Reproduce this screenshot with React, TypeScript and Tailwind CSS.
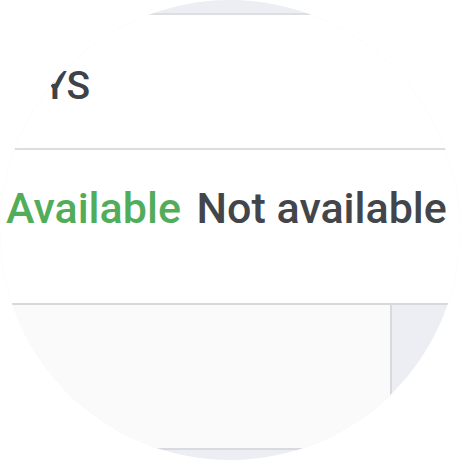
export default function App() {
  return (
    <div className="w-[460px] h-[460px] bg-white font-['Roboto',sans-serif]">
      <div className="w-[460px] h-[460px] rounded-full overflow-hidden bg-[#eceef3] flex flex-col">
        <div className="h-[13px] shrink-0" />

        {/* card */}
        <div className="h-[290px] shrink-0 bg-white border-t-2 border-[#dcdee2] flex flex-col">
          <div className="relative h-[133px] shrink-0 pl-[43px] pt-[52px]">
            <span className="block text-[39px] font-medium leading-none text-[#3f4347]">YS</span>
            <div className="absolute left-0 top-0 w-[70px] h-[90px] bg-white [clip-path:polygon(30px_46px,58px_46px,58px_62px,54px_69px,46px_69px,30px_76px)]" />
          </div>
          <div className="h-[2px] shrink-0 bg-[#dcdddf]" />
          <div className="pl-[6px] pt-[37px] text-[43px] font-medium leading-none whitespace-nowrap">
            <span className="text-[#52ad5b]">Available</span>{' '}
            <span className="ml-[5px] text-[#42464a]">Not available</span>
          </div>
        </div>

        <div className="h-[2px] shrink-0 bg-[#d6d8dc]" />
        <div className="flex h-[143px] shrink-0">
          <div className="w-[392px] bg-[#fafafb] border-r-2 border-[#d8dade]" />
          <div className="flex-1" />
        </div>
        <div className="h-[2px] shrink-0 bg-[#d8dadf]" />
        <div className="flex-1" />
      </div>
    </div>
  );
}
